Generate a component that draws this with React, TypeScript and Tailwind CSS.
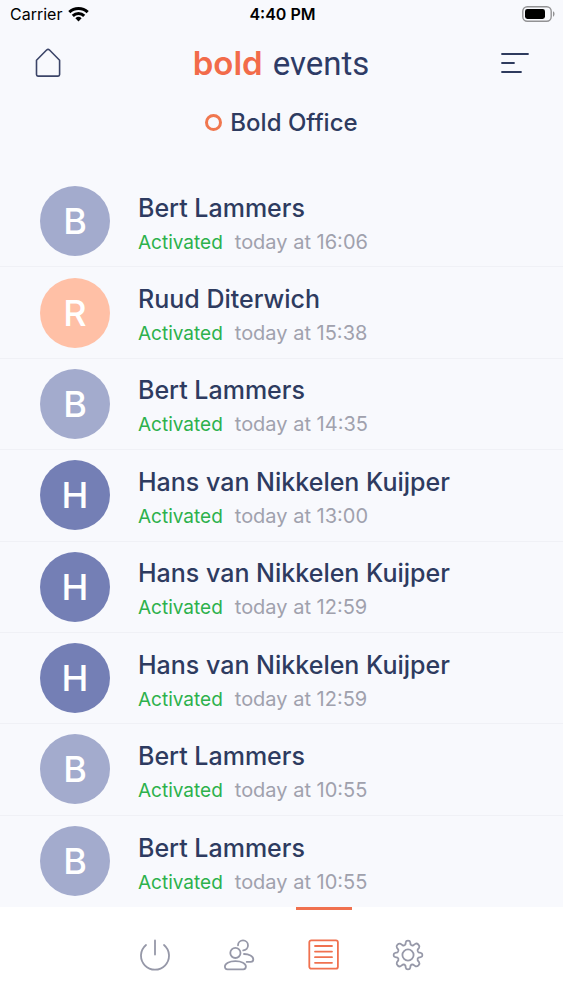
import React from "react";

type Entry = { name: string; time: string; color: string };

const entries: Entry[] = [
  { name: "Bert Lammers", time: "16:06", color: "bg-[#a3abcd]" },
  { name: "Ruud Diterwich", time: "15:38", color: "bg-[#ffc0a6]" },
  { name: "Bert Lammers", time: "14:35", color: "bg-[#a3abcd]" },
  { name: "Hans van Nikkelen Kuijper", time: "13:00", color: "bg-[#747fb5]" },
  { name: "Hans van Nikkelen Kuijper", time: "12:59", color: "bg-[#747fb5]" },
  { name: "Hans van Nikkelen Kuijper", time: "12:59", color: "bg-[#747fb5]" },
  { name: "Bert Lammers", time: "10:55", color: "bg-[#a3abcd]" },
  { name: "Bert Lammers", time: "10:55", color: "bg-[#a3abcd]" },
];

function StatusBar() {
  return (
    <div className="grid h-7 grid-cols-3 items-center pr-2 pl-[10px] text-base text-black">
      <div className="flex items-center gap-[6px]">
        <span>Carrier</span>
        <svg width="21" height="16" viewBox="0 0 21 16" fill="none" stroke="#000" strokeWidth="3" aria-hidden="true">
          <path d="M1.3 6.2a13.2 13.2 0 0 1 18.4 0" />
          <path d="M4.8 9.9a8.2 8.2 0 0 1 11.4 0" />
          <path d="M10.5 15.4 7.4 12.2a4.6 4.6 0 0 1 6.2 0z" fill="#000" stroke="none" />
        </svg>
      </div>
      <span className="text-center font-semibold whitespace-nowrap">4:40 PM</span>
      <svg className="justify-self-end" width="33" height="16" viewBox="0 0 33 16" fill="none" aria-hidden="true">
        <rect x="0.8" y="0.8" width="28.4" height="14.4" rx="4.5" stroke="#929294" strokeWidth="1.4" />
        <rect x="3" y="3" width="20" height="10" rx="2.4" fill="#000" />
        <path d="M31 5.3c2 .8 2 4.6 0 5.4z" fill="#929294" />
      </svg>
    </div>
  );
}

function Header() {
  return (
    <header className="flex h-[70px] items-center justify-between px-[34px]">
      <button type="button" aria-label="Home">
        <svg width="28" height="32" viewBox="0 0 28 32" fill="none" stroke="#3b4468" strokeWidth="1.6" strokeLinejoin="round">
          <path d="M2.5 13.2 12.6 3c1-.9 1.9-.9 2.9 0l10.1 10.2v14.4q0 1.5-1.5 1.5H4q-1.5 0-1.5-1.5z" />
        </svg>
      </button>
      <h1 className="flex items-baseline gap-[10px] font-['Roboto',sans-serif] text-[33px] leading-[38px] text-[#2e3b66]">
        <span className="font-['Inter',sans-serif] font-semibold text-[#f26b4a]">bold</span>
        <span>events</span>
      </h1>
      <button type="button" aria-label="Menu">
        <svg width="29" height="22" viewBox="0 0 29 22" fill="none" stroke="#2e3b5e" strokeWidth="1.8" strokeLinecap="round">
          <path d="M2 2h26M2 11h12M2 20h19" />
        </svg>
      </button>
    </header>
  );
}

const navIcon = "flex h-full w-14 items-center justify-center border-t-3";

export default function App() {
  return (
    <div className="flex min-h-screen flex-col bg-[#f8f9fd] font-['Inter',sans-serif] text-[#2e3b60]">
      <StatusBar />
      <Header />
      <div className="flex h-[78px] items-start justify-center gap-2 pt-2 text-2xl leading-[34px] font-medium">
        <span className="mt-2 size-[17px] rounded-full border-3 border-[#f0774f]" />
        <h2>Bold Office</h2>
      </div>

      <ul className="grid flex-1 auto-rows-fr">
        {entries.map((entry, i) => (
          <li key={i} className="flex items-center gap-7 border-b border-[#f0f1f6] px-10 last:border-b-0">
            <span
              className={`flex size-[70px] shrink-0 items-center justify-center rounded-full text-4xl font-medium text-white ${entry.color}`}
            >
              {entry.name[0]}
            </span>
            <div className="min-w-0 pt-[6px]">
              <h3 className="text-[25px] leading-9 font-medium">{entry.name}</h3>
              <p className="flex items-baseline gap-3 text-[19px] leading-8">
                <span className="text-[#2db14c]">Activated</span>
                <span className="text-[20px] text-[#a0a1ad]">today at {entry.time}</span>
              </p>
            </div>
          </li>
        ))}
      </ul>

      <nav className="flex h-[93px] items-center justify-center gap-7 bg-white text-[#9698a8]">
        <button type="button" aria-label="Power" className={`${navIcon} border-transparent`}>
          <svg width="32" height="32" viewBox="0 0 32 32" fill="none" stroke="currentColor" strokeWidth="1.8" strokeLinecap="round">
            <path d="M15 1.5v14M6 6a14 14 0 1 0 18 0" />
          </svg>
        </button>
        <button type="button" aria-label="People" className={`${navIcon} border-transparent`}>
          <svg width="32" height="32" viewBox="0 0 32 32" fill="none" stroke="currentColor" strokeWidth="1.8" strokeLinecap="round" strokeLinejoin="round">
            <circle cx="11.4" cy="13.9" r="5.1" />
            <path d="M14 6.3a5 5 0 1 1 5.2 5.1" />
            <path d="M20 15c5 0 9.3 2.2 9.3 5.3 0 1.6-1 2.6-2.6 2.6h-4" />
            <path d="M11.4 22.2c6.2 0 10.5 2.3 10.5 5.4 0 1.8-.8 2.7-2.6 2.7H3.5c-1.8 0-2.6-.9-2.6-2.7 0-3.1 4.3-5.4 10.5-5.4z" />
          </svg>
        </button>
        <button type="button" aria-label="Activity" className={`${navIcon} border-[#f0714f] text-[#f0714f]`}>
          <svg width="32" height="32" viewBox="0 0 32 32" fill="none" stroke="currentColor" strokeWidth="1.8" strokeLinecap="round">
            <rect x="1.3" y="1.3" width="28.6" height="28.4" rx="2" />
            <path d="M7 7h17M7 12.6h17M7 18.2h17M7 23.8h17" />
          </svg>
        </button>
        <button type="button" aria-label="Settings" className={`${navIcon} border-transparent`}>
          <svg width="32" height="32" viewBox="0 0 32 32" fill="none" stroke="currentColor" strokeWidth="1.8" strokeLinejoin="round">
            <circle cx="16" cy="16" r="5.6" />
            <path d="M13.4 5.5 13.8 3.2Q14 1.6 16 1.6T18.2 3.2L18.6 5.5Q19.6 6.9 21.4 6.3L23.3 4.9Q24.7 3.9 26.3 5.5T27.1 8.7L25.7 10.6Q25.1 12.4 26.5 13.4L28.8 13.8Q30.4 14 30.4 16T28.8 18.2L26.5 18.6Q25.1 19.6 25.7 21.4L27.1 23.3Q28.1 24.7 26.5 26.3T23.3 27.1L21.4 25.7Q19.6 25.1 18.6 26.5L18.2 28.8Q18 30.4 16 30.4T13.8 28.8L13.4 26.5Q12.4 25.1 10.6 25.7L8.7 27.1Q7.3 28.1 5.7 26.5T4.9 23.3L6.3 21.4Q6.9 19.6 5.5 18.6L3.2 18.2Q1.6 18 1.6 16T3.2 13.8L5.5 13.4Q6.9 12.4 6.3 10.6L4.9 8.7Q3.9 7.3 5.5 5.7T8.7 4.9L10.6 6.3Q12.4 6.9 13.4 5.5Z" />
          </svg>
        </button>
      </nav>
    </div>
  );
}
